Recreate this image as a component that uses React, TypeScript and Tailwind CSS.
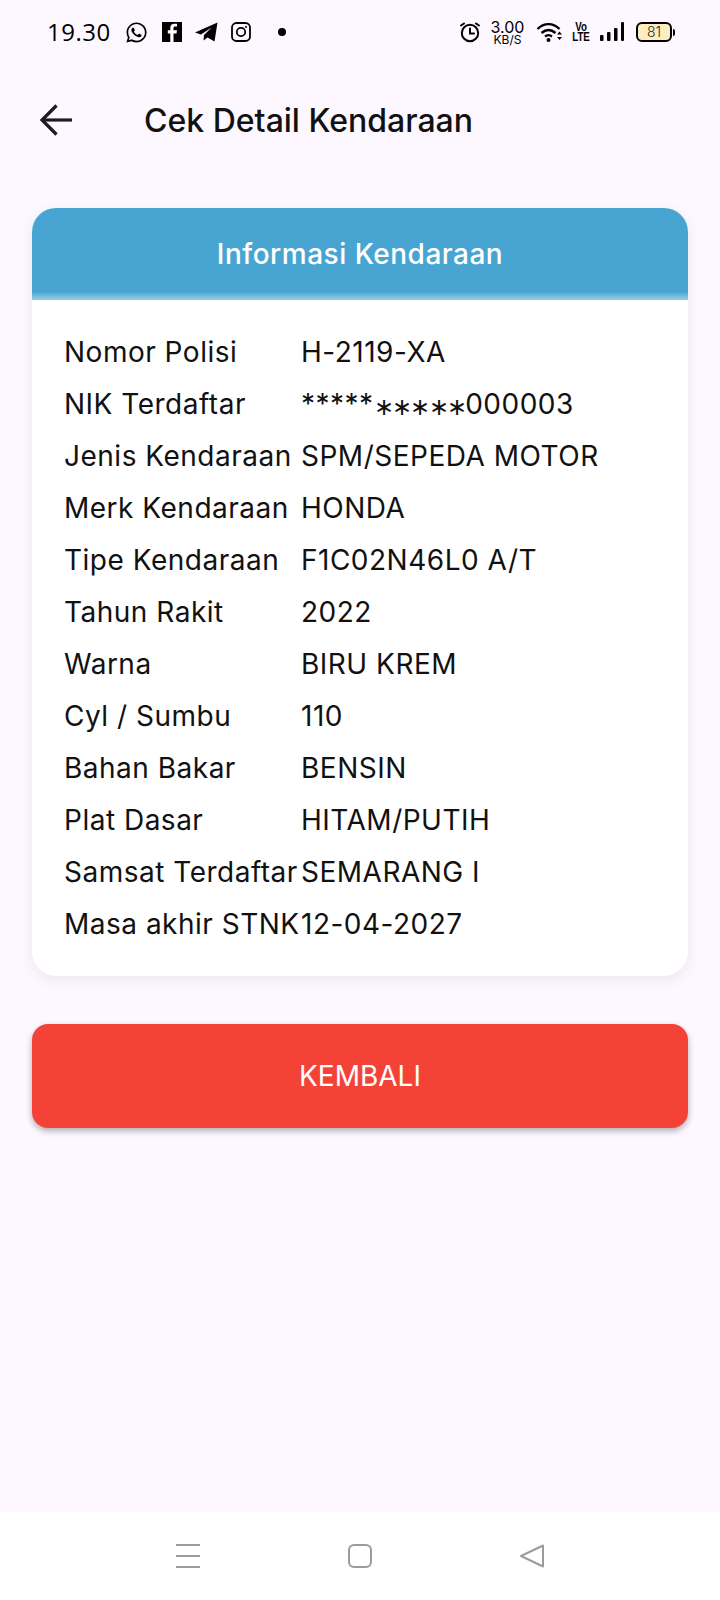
import React from "react";
import { FaWhatsapp } from "react-icons/fa";

const rows: [string, React.ReactNode][] = [
  ["Nomor Polisi", "H-2119-XA"],
  [
    "NIK Terdaftar",
    <>
      *****<span className="text-[23.5px] tracking-[-1.7px] font-light align-[-1px]">∗∗∗∗∗</span>000003
    </>,
  ],
  ["Jenis Kendaraan", "SPM/SEPEDA MOTOR"],
  ["Merk Kendaraan", "HONDA"],
  ["Tipe Kendaraan", "F1C02N46L0 A/T"],
  ["Tahun Rakit", "2022"],
  ["Warna", "BIRU KREM"],
  ["Cyl / Sumbu", "110"],
  ["Bahan Bakar", "BENSIN"],
  ["Plat Dasar", "HITAM/PUTIH"],
  ["Samsat Terdaftar", "SEMARANG I"],
  ["Masa akhir STNK", "12-04-2027"],
];

function StatusBar() {
  return (
    <div className="h-[64px] flex items-center justify-between pl-[47px] pr-[45px] text-black">
      <div className="flex items-center">
        <span className="text-[24px] font-['Open_Sans'] font-normal tracking-[0.5px] w-[78px]">19.30</span>
        <FaWhatsapp className="w-[23px] h-[23px]" />
        <svg className="ml-[14px]" width="20" height="20" viewBox="0 0 20 20">
          <rect width="20" height="20" fill="black" />
          <path d="M11.5 20V11.5H14.5L15 8.2H11.5V6.2C11.5 5.2 12 4.6 13.2 4.6H15V1.8H12.4C9.8 1.8 8.3 3.4 8.3 5.8V8.2H5.8V11.5H8.3V20Z" fill="white" />
        </svg>
        <svg className="ml-[13px]" width="23" height="20" viewBox="0 0 23 20" fill="black">
          <path d="M0 10.5L22.5 0.5L19.5 19.5L12.5 15.5L8.5 18.5L9 13L16.5 5.5L6 12.5Z" />
        </svg>
        <svg className="ml-[13px]" width="20" height="20" viewBox="0 0 20 20" fill="none" stroke="black" strokeWidth="1.8">
          <rect x="1" y="1" width="18" height="18" rx="4.5" />
          <circle cx="10" cy="10" r="4.2" />
          <circle cx="15" cy="5" r="0.8" fill="black" strokeWidth="0.6" />
        </svg>
        <span className="w-[8px] h-[8px] rounded-full bg-black ml-[27px]" />
      </div>
      <div className="flex items-center">
        <svg width="22" height="22" viewBox="0 0 22 22" fill="none" stroke="black" strokeWidth="2" strokeLinecap="round">
          <circle cx="11" cy="12" r="8.2" />
          <path d="M11 7.5V12.5H15" />
          <path d="M2 4.5L5 2.5M20 4.5L17 2.5" />
        </svg>
        <div className="flex flex-col items-center ml-[10px] w-[33px] font-['Inter'] text-black">
          <span className="text-[16px] leading-[14px]">3.00</span>
          <span className="text-[12px] leading-[11px]">KB/S</span>
        </div>
        <svg className="ml-[12px]" width="28" height="22" viewBox="0 0 28 22" fill="none">
          <path d="M1.5 8C8 1.5 17 1.5 23.5 8" stroke="black" strokeWidth="2.4" />
          <path d="M5.5 12C10 8 15 8 19.5 12" stroke="black" strokeWidth="2.4" />
          <path d="M9 15.5C11 14 14 14 16 15.5" stroke="black" strokeWidth="2.2" />
          <circle cx="12.5" cy="19" r="2" fill="black" />
          <path d="M21 13.5L23.5 10.5L26 13.5ZM21 16L23.5 19L26 16Z" fill="black" />
        </svg>
        <div className="ml-[9px] flex flex-col items-center font-['Liberation_Sans'] font-bold text-[13px] leading-[10px] w-[16px] scale-x-75">
          <span>Vo</span>
          <span>LTE</span>
        </div>
        <svg className="ml-[10px]" width="26" height="20" viewBox="0 0 26 20" fill="black">
          <rect x="1" y="13" width="3.5" height="6" rx="1" />
          <rect x="8" y="10" width="3.5" height="9" rx="1" />
          <rect x="15" y="6" width="3.5" height="13" rx="1" />
          <rect x="22" y="0" width="3" height="19" rx="1" />
        </svg>
        <div className="ml-[11px] flex items-center">
          <div className="w-[36px] h-[20px] rounded-[6px] border-2 border-black bg-[#fdeec0] flex items-center justify-center text-[14px] font-['Inter'] font-light leading-none text-[#222]">
            81
          </div>
          <div className="w-[2px] h-[7px] bg-black ml-[1px] rounded-r" />
        </div>
      </div>
    </div>
  );
}

function TopBar() {
  return (
    <div className="h-[112px] flex items-center pl-[38px]">
      <svg width="36" height="36" viewBox="0 0 36 36" fill="none" stroke="#1d1b20" strokeWidth="3.2">
        <path d="M34 18H4.5" />
        <path d="M18.5 3.5L4 18L18.5 32.5" />
      </svg>
      <h1 className="ml-[70px] mt-[1px] text-[32px] leading-none font-medium text-[#111]">Cek Detail Kendaraan</h1>
    </div>
  );
}

export default function App() {
  return (
    <div className="w-[720px] h-[1600px] flex flex-col bg-[#fdf7ff] font-['Inter',sans-serif]">
      <StatusBar />
      <TopBar />
      <div className="flex-1 px-[32px] pt-[32px]">
        <div className="h-[768px] rounded-[24px] bg-white shadow-[0_4px_14px_rgba(0,0,0,0.07)] overflow-hidden">
          <div className="h-[92px] bg-[linear-gradient(#48a5d2_91%,#9ccde6)] flex items-center justify-center text-white text-[28px] font-medium tracking-[0.5px]">
            Informasi Kendaraan
          </div>
          <div className="pt-[26px] pl-[32px]">
            {rows.map(([label, value]) => (
              <div key={label} className="h-[52px] flex items-center text-[28px] tracking-[0.5px] text-[#111] whitespace-nowrap">
                <div className="w-[237px] shrink-0">{label}</div>
                <div>{value}</div>
              </div>
            ))}
          </div>
        </div>
        <div className="mt-[48px] h-[104px] rounded-[16px] bg-[#f44336] shadow-[0_3px_6px_rgba(0,0,0,0.3)] flex items-center justify-center text-white text-[28px] font-normal">
          KEMBALI
        </div>
      </div>
      <div className="h-[88px] bg-white flex items-center justify-center gap-[146px]">
        <svg width="26" height="26" viewBox="0 0 26 26" stroke="#9b9b9b" strokeWidth="2">
          <path d="M1 2H25M1 13H25M1 24H25" />
        </svg>
        <svg width="26" height="26" viewBox="0 0 26 26" fill="none" stroke="#9b9b9b" strokeWidth="2">
          <rect x="2" y="2" width="22" height="22" rx="5" />
        </svg>
        <svg width="26" height="26" viewBox="0 0 26 26" fill="none" stroke="#9b9b9b" strokeWidth="2" strokeLinejoin="round">
          <path d="M24 2.5V23.5L2 13Z" />
        </svg>
      </div>
    </div>
  );
}
